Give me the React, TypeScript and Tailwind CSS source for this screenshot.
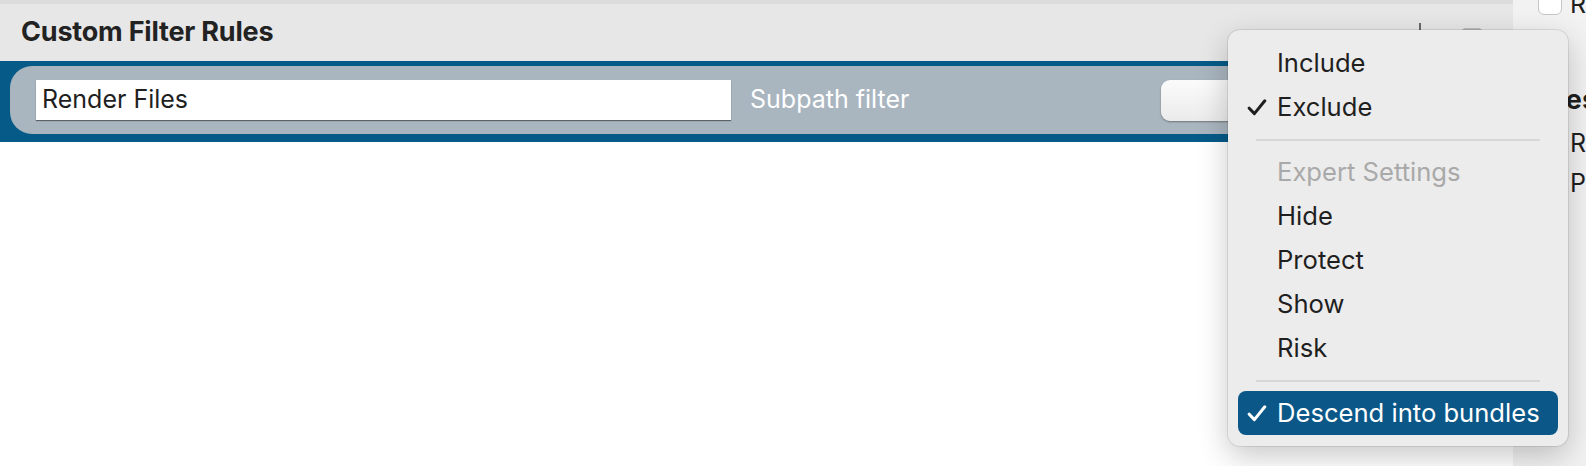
import React from "react";

const font = { fontFamily: '"Inter", "Liberation Sans", sans-serif' };

function Check({ className }: { className?: string }) {
	return (
		<svg viewBox="0 0 20 17" className={className} fill="none">
			<path d="M2.2 9.2 L7.4 14.6 L17.8 1.8" stroke="currentColor" strokeWidth="3" strokeLinecap="round" strokeLinejoin="round" />
		</svg>
	);
}

function MenuItem({ label, checked, muted }: { label: string, checked?: boolean, muted?: boolean }) {
	return (
		<div className={`h-[44px] flex items-center px-[9px] ${muted ? "text-[#a9a9a9]" : "text-[#1f1f1f]"}`}>
			<div className="w-[30px] flex items-center">
				{checked && <Check className="w-[20px] h-[17px]" />}
			</div>
			<span>{label}</span>
		</div>
	);
}

function Separator() {
	return (
		<div className="h-[21px] flex items-center px-[18px]">
			<div className="h-[2px] w-full bg-[#d7d7d7]" />
		</div>
	);
}

export default function App() {
	return (
		<div className="relative w-[1586px] h-[466px] overflow-hidden bg-white text-[25px]" style={font}>
			<div className="flex h-full">
				{/* main panel */}
				<div className="w-[1513px] shrink-0 flex flex-col">
					<div className="h-[4px] bg-[#dcdcdc]" />
					<div className="h-[57px] bg-[#e7e7e7] flex items-center justify-between pl-[21px] pr-[30px]">
						<h1 className="font-bold text-[27px] text-[#222] tracking-[-0.2px]">Custom Filter Rules</h1>
						<div className="flex items-start gap-[31px] h-[40px]">
							<div className="relative w-[20px] h-[20px] mt-[10px]">
								<div className="absolute left-[9px] top-0 w-[2px] h-[20px] bg-[#6a6a6a]" />
								<div className="absolute top-[9px] left-0 h-[2px] w-[20px] bg-[#6a6a6a]" />
							</div>
							<div className="w-[22px] h-[18px] rounded-[5px] bg-[#b9b9b9] mt-[15px]" />
						</div>
					</div>
					<div className="h-[81px] bg-[#055a87] pt-[5px] pl-[10px]">
						<div className="h-[68px] bg-[#a9b5bf] rounded-l-[22px] flex items-center pl-[26px]">
							<div className="w-[695px] h-[40px] bg-white shadow-[0_1px_1px_rgba(0,0,0,0.45)] flex items-center pl-[6px] text-[#1f1f1f]">
								Render Files
							</div>
							<div className="ml-[19px] text-white">Subpath filter</div>
							<div className="ml-[252px] w-[240px] h-[41px] rounded-[9px] bg-gradient-to-b from-[#fbfbfb] to-[#ebebeb] shadow-[0_1px_2px_rgba(0,0,0,0.35)]" />
						</div>
					</div>
					<div className="flex-1 bg-white" />
				</div>
				{/* right sidebar */}
				<div className="flex-1 min-w-0 overflow-hidden bg-[#f2f2f2] flex flex-col">
					<div className="flex items-center h-[14px]">
						<div className="ml-[25px] w-[24px] h-[26px] -mt-[10px] rounded-[6px] bg-white border border-[#c6c6c6] shrink-0" />
						<span className="ml-[8px] text-[#1f1f1f] -mt-[4px] whitespace-nowrap">Read</span>
					</div>
					<div className="mt-[66px] ml-[11px] font-bold text-[27px] text-[#1f1f1f] whitespace-nowrap">Rules</div>
					<div className="mt-[4px] ml-[57px] text-[#1f1f1f] whitespace-nowrap">Remove</div>
					<div className="mt-[3px] ml-[57px] text-[#1f1f1f] whitespace-nowrap">Preserve</div>
				</div>
			</div>

			{/* popup menu */}
			<div className="absolute left-[1228px] top-[30px] w-[340px] h-[416px] rounded-[12px] bg-[#ececec] shadow-[0_10px_30px_rgba(0,0,0,0.22),0_0_0_1px_rgba(0,0,0,0.09)] pt-[11px] px-[10px] text-[25.6px]">
				<MenuItem label="Include" />
				<MenuItem label="Exclude" checked />
				<Separator />
				<MenuItem label="Expert Settings" muted />
				<MenuItem label="Hide" />
				<MenuItem label="Protect" />
				<MenuItem label="Show" />
				<MenuItem label="Risk" />
				<Separator />
				<div className="h-[44px] flex items-center px-[9px] rounded-[8px] bg-[#0b5888] text-white">
					<div className="w-[30px] flex items-center">
						<Check className="w-[20px] h-[17px]" />
					</div>
					<span>Descend into bundles</span>
				</div>
			</div>
		</div>
	);
}
